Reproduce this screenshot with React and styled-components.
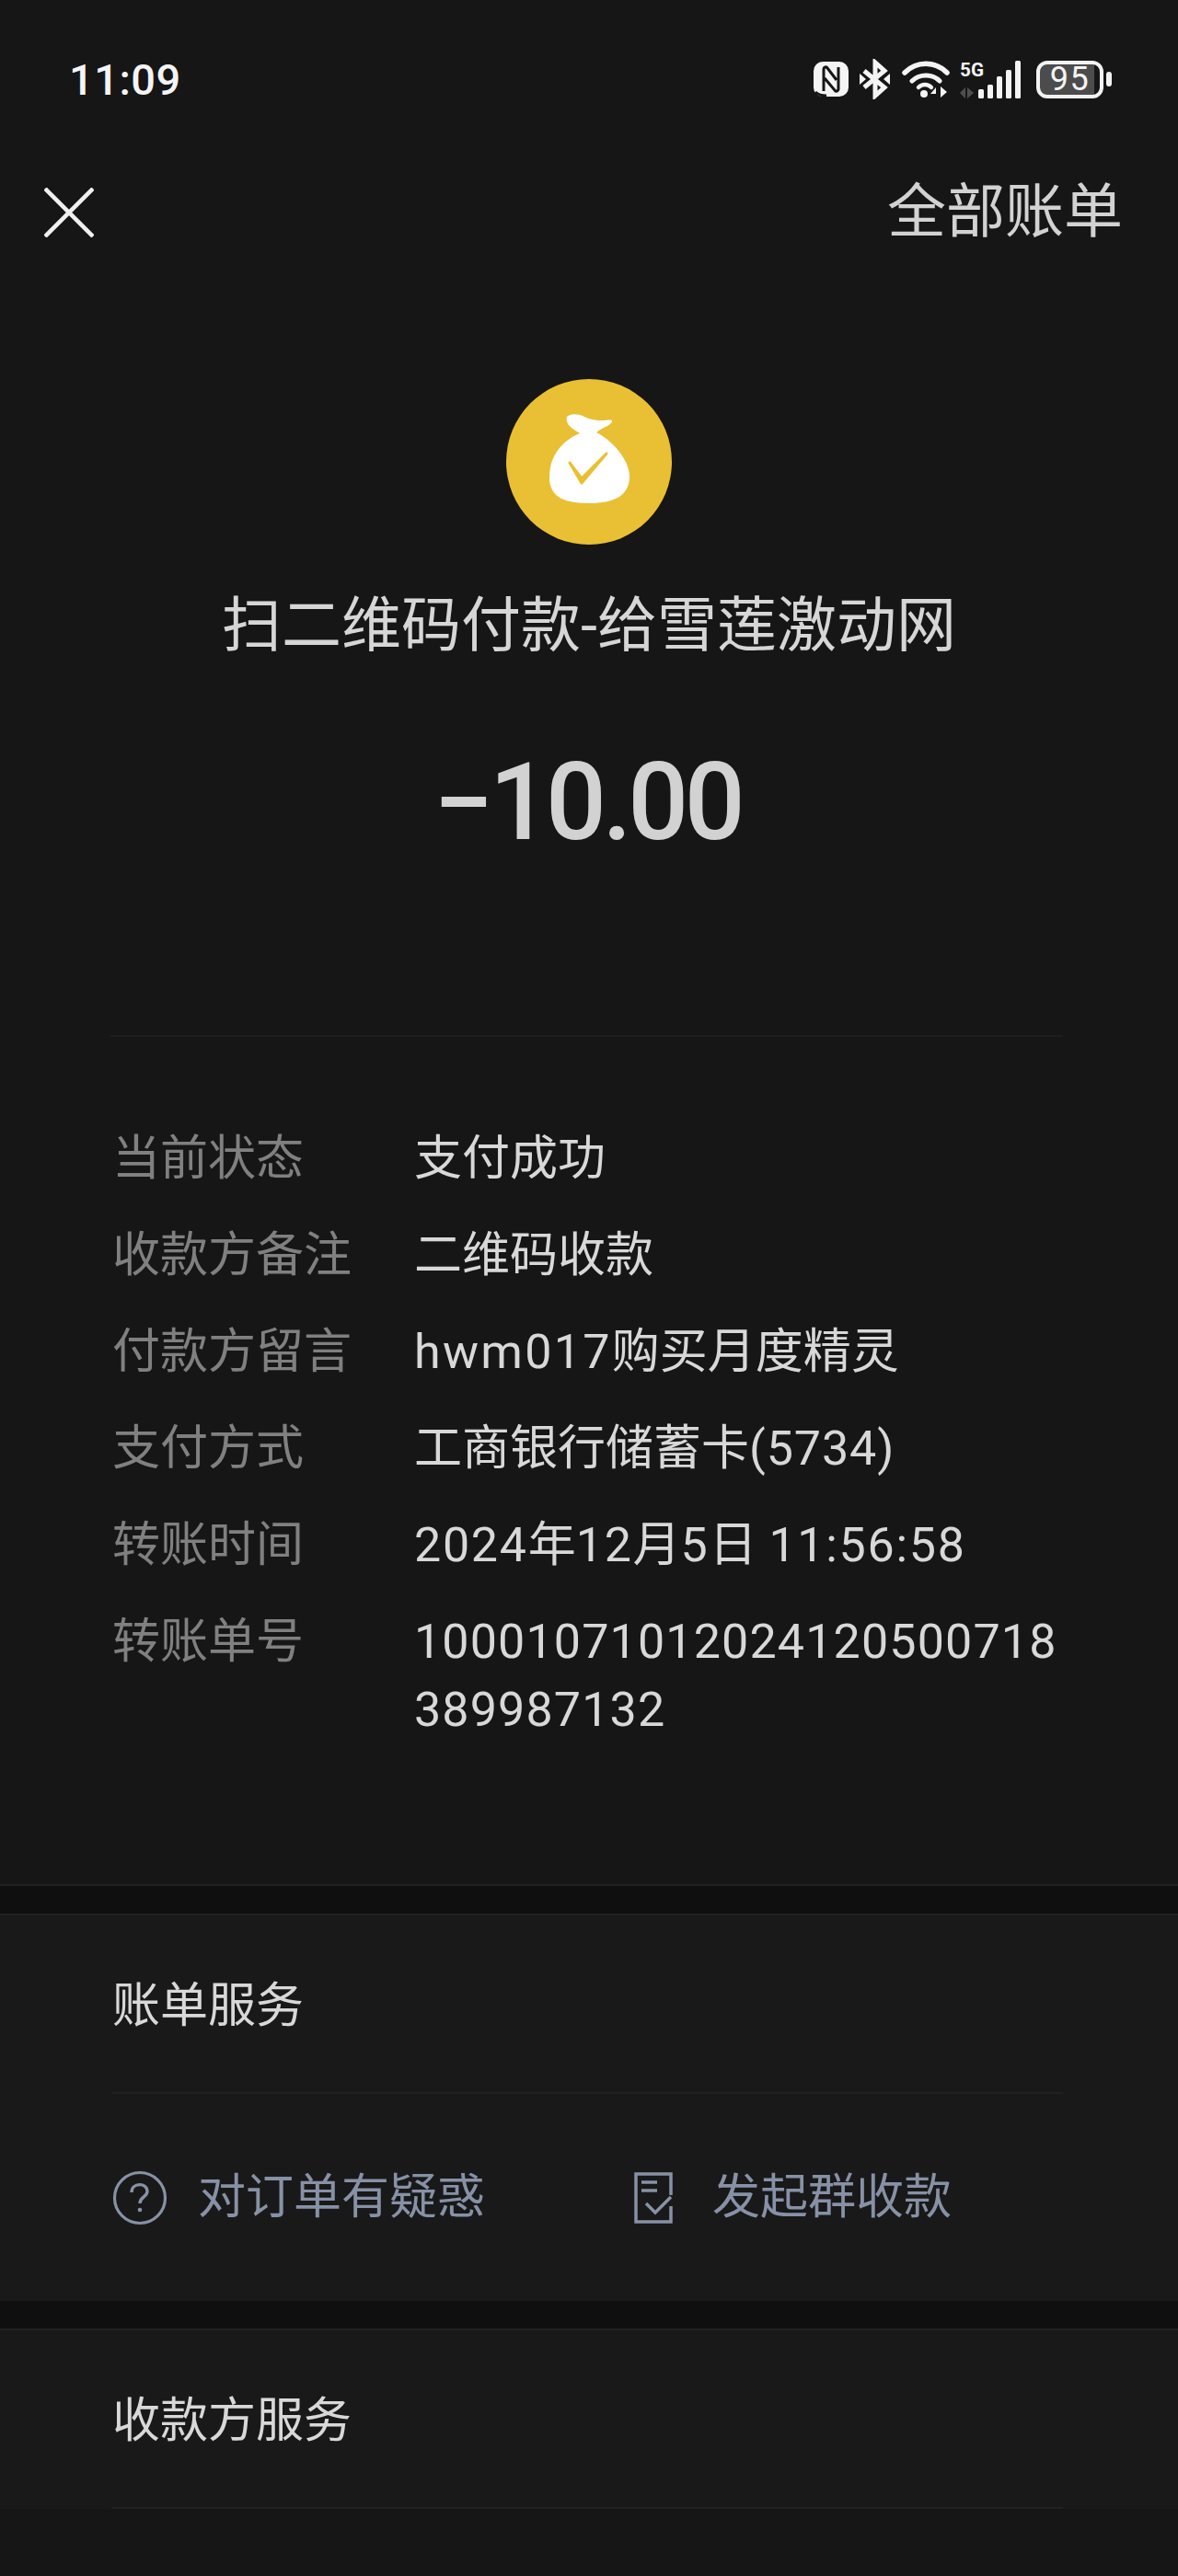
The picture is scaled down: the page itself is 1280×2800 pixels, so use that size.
import React from 'react'
import styled, { createGlobalStyle } from 'styled-components'

const GlobalStyle = createGlobalStyle`
  html, body {
    margin: 0;
    padding: 0;
    background: #161616;
  }
  * {
    box-sizing: border-box;
  }
`

const Page = styled.div`
  width: 1280px;
  height: 2800px;
  overflow: hidden;
  background: #161616;
  font-family: Roboto, "Noto Sans CJK SC", sans-serif;
`

const StatusBar = styled.div`
  height: 172px;
  padding: 0 72px 0 75px;
  display: flex;
  align-items: center;
  justify-content: space-between;
`

const Time = styled.span`
  font-size: 47px;
  font-weight: 500;
  letter-spacing: 0.5px;
  color: #f4f4f4;
`

const StatusIcons = styled.div`
  display: flex;
  align-items: center;
  height: 44px;
`

const StatusSvg = styled.svg`
  display: block;
  flex: none;
  margin-left: ${props => props.$gap || 0}px;
`

const Battery = styled.div`
  width: 73px;
  height: 41px;
  margin-left: 16px;
  border: 4px solid #f2f2f2;
  border-radius: 12px;
  overflow: hidden;
  display: flex;
  align-items: center;
  justify-content: center;
  background: linear-gradient(90deg, #4c4c4c 91%, transparent 91%);
  font-size: 36px;
  letter-spacing: 1.5px;
  line-height: 1;
  color: #f4f4f4;
`

const BatteryCap = styled.div`
  width: 6px;
  height: 16px;
  margin-left: 3px;
  border-radius: 3px;
  background: #f2f2f2;
`

const Header = styled.div`
  height: 112px;
  padding: 0 60px 0 48px;
  display: flex;
  align-items: center;
  justify-content: space-between;
`

const CloseSvg = styled.svg`
  display: block;
  margin-top: 6px;
`

const AllBills = styled.span`
  margin-top: 5px;
  font-size: 64px;
  line-height: 1;
  color: #d2d2d2;
`

const Hero = styled.div`
  padding-top: 128px;
  display: flex;
  flex-direction: column;
  align-items: center;
`

const Title = styled.div`
  margin-top: 48px;
  font-size: 65px;
  line-height: 80px;
  color: #d6d6d6;
`

const Amount = styled.div`
  margin-top: 82px;
  padding-right: 4px;
  font-size: 116px;
  font-weight: 500;
  line-height: 140px;
  letter-spacing: -4.5px;
  color: #d2d2d2;
`

const Divider = styled.div`
  height: 2px;
  margin: 183px 125px 0 120px;
  background: #1e1e1e;
`

const Details = styled.div`
  padding: 96px 125px 152px 122px;
  border-bottom: 2px solid #212121;
`

const Row = styled.div`
  display: grid;
  grid-template-columns: 328px 1fr;
  padding-bottom: ${props => (props.$last ? 0 : 31)}px;
  font-size: 52px;
  line-height: 74px;
`

const Label = styled.span`
  color: #808080;
`

const Value = styled.span`
  color: #d8d8d8;
  word-break: break-all;
`

const Num = styled.span`
  letter-spacing: ${props => props.$spacing || 1.15}px;
`

const Band = styled.div`
  height: 30px;
  background: #0f0f0f;
`

const Section = styled.div`
  background: #191919;
  border-top: 2px solid #212121;
`

const SectionTitle = styled.div`
  height: 194px;
  margin: 0 125px 0 122px;
  padding-bottom: 6px;
  display: flex;
  align-items: center;
  border-bottom: 2px solid #222222;
  font-size: 52px;
  color: #d8d8d8;
`

const Actions = styled.div`
  height: 225px;
  padding: 0 0 0 122px;
  display: flex;
  align-items: center;
`

const Action = styled.div`
  width: ${props => props.$width}px;
  display: flex;
  align-items: center;
  gap: ${props => props.$gap}px;
  font-size: 52px;
  line-height: 60px;
  color: #8791a6;
`

const CloseIcon = () => (
  <CloseSvg width="54" height="54" viewBox="0 0 54 54" fill="none" stroke="#f0f0f0" strokeWidth="4.5">
    <path d="M1 1L53 53M53 1L1 53" />
  </CloseSvg>
)

const NfcIcon = () => (
  <StatusSvg width="38" height="38" viewBox="0 0 38 38">
    <rect x="0" y="0" width="38" height="38" rx="10" fill="#f4f4f4" />
    <path
      d="M11 32V8c0-2 3-3 4-1l10 13M27 6v24c0 2-3 3-4 1L12 18M2 33c3 3 7 4 12 4"
      fill="none"
      stroke="#161616"
      strokeWidth="3"
    />
  </StatusSvg>
)

const BluetoothIcon = () => (
  <StatusSvg $gap={12} width="33" height="44" viewBox="0 0 33 44">
    <path d="M5 13L27 31L17 40V4L27 13L5 31" fill="none" stroke="#f4f4f4" strokeWidth="5" />
    <path d="M0 16L7 22L0 28ZM33 16L26 22L33 28Z" fill="#f4f4f4" />
  </StatusSvg>
)

const WifiIcon = () => (
  <StatusSvg $gap={13} width="52" height="42" viewBox="0 0 52 42" fill="none" stroke="#f4f4f4" strokeLinecap="round">
    <path d="M3 14C16 1 36 1 49 14" strokeWidth="5.5" />
    <path d="M11 23C19 15 33 15 41 23" strokeWidth="5" />
    <path d="M18 30C22 26 28 26 32 30" strokeWidth="4.5" />
    <circle cx="24" cy="37" r="4" fill="#f4f4f4" stroke="none" />
    <path d="M37 41V30L31 37H37M42 29V41L49 35Z" fill="#f4f4f4" stroke="none" />
  </StatusSvg>
)

const SignalIcon = () => (
  <StatusSvg $gap={10} width="68" height="42" viewBox="0 0 68 42">
    <text x="1" y="18" fontFamily="Roboto, sans-serif" fontSize="21" fontWeight="700" fill="#f4f4f4" textLength="26" lengthAdjust="spacingAndGlyphs">5G</text>
    <path d="M7 30L1 36L7 42ZM9 30V42L16 36Z" fill="#4f4f4f" />
    <rect x="21" y="32" width="6" height="10" rx="1.5" fill="#f4f4f4" />
    <rect x="31" y="27" width="6" height="15" rx="1.5" fill="#f4f4f4" />
    <rect x="41" y="18" width="6" height="24" rx="1.5" fill="#f4f4f4" />
    <rect x="51" y="11" width="6" height="31" rx="1.5" fill="#f4f4f4" />
    <rect x="61" y="1" width="6" height="41" rx="1.5" fill="#f4f4f4" />
  </StatusSvg>
)

const MoneyBag = () => (
  <svg width="180" height="180" viewBox="0 0 180 180">
    <circle cx="90" cy="90" r="90" fill="#e9c033" />
    <path
      d="M66 41C70 37 78 38 83 40C88 43 96 45 104 45C108 45 113 44 115 45C116 47 113 49 110 51C106 53 101 55 98 58C108 63 120 73 127 85C132 93 134 100 134 106C134 116 130 123 123 128C114 133 103 135 92 135C80 135 68 134 60 130C52 126 47 118 47 108C47 97 49 88 55 79C61 70 70 63 80 59C76 56 71 54 68 50C66 47 65 44 66 41Z"
      fill="#ffffff"
    />
    <path d="M69 91L82 108L109 81L82 113Z" fill="#e9c033" stroke="#e9c033" strokeWidth="3" strokeLinejoin="round" />
  </svg>
)

const QuestionIcon = () => (
  <svg width="60" height="60" viewBox="0 0 60 60" fill="none" stroke="#8791a6" strokeWidth="3.2">
    <circle cx="30" cy="30" r="27.5" />
    <path d="M21 24C21 13 38 13 38 23C38 29 30 29 30 36" strokeWidth="3.4" />
    <circle cx="30" cy="43" r="2.3" fill="#8791a6" stroke="none" />
  </svg>
)

const ReceiptIcon = () => (
  <svg width="42" height="56" viewBox="0 0 42 56" fill="none" stroke="#8791a6" strokeWidth="3.5">
    <path d="M40 25V2H2V54H40V37" />
    <path d="M8 11H25M8 20H25M13 34L23 44L40 27" />
  </svg>
)

const rows = [
  ['当前状态', '支付成功'],
  ['收款方备注', '二维码收款'],
  ['付款方留言', <><Num $spacing={2.3}>hwm017</Num>购买月度精灵</>],
  ['支付方式', <>工商银行储蓄卡<Num $spacing={0.9}>(5734)</Num></>],
  ['转账时间', <><Num $spacing={1.7}>2024</Num>年<Num $spacing={1.7}>12</Num>月<Num $spacing={1.7}>5</Num>日 <Num $spacing={1.7}>11:56:58</Num></>],
]

const App = () => (
  <Page>
    <GlobalStyle />
    <StatusBar>
      <Time>11:09</Time>
      <StatusIcons>
        <NfcIcon />
        <BluetoothIcon />
        <WifiIcon />
        <SignalIcon />
        <Battery>95</Battery>
        <BatteryCap />
      </StatusIcons>
    </StatusBar>
    <Header>
      <CloseIcon />
      <AllBills>全部账单</AllBills>
    </Header>
    <Hero>
      <MoneyBag />
      <Title>扫二维码付款-给雪莲激动网</Title>
      <Amount>−10.00</Amount>
    </Hero>
    <Divider />
    <Details>
      {rows.map(([label, value]) => (
        <Row key={label}>
          <Label>{label}</Label>
          <Value>{value}</Value>
        </Row>
      ))}
      <Row $last>
        <Label>转账单号</Label>
        <Value><Num>10001071012024120500718389987132</Num></Value>
      </Row>
    </Details>
    <Band />
    <Section>
      <SectionTitle>账单服务</SectionTitle>
      <Actions>
        <Action $width={567} $gap={33}>
          <QuestionIcon />
          对订单有疑惑
        </Action>
        <Action $gap={43}>
          <ReceiptIcon />
          发起群收款
        </Action>
      </Actions>
    </Section>
    <Band />
    <Section>
      <SectionTitle>收款方服务</SectionTitle>
    </Section>
  </Page>
)

export default App
